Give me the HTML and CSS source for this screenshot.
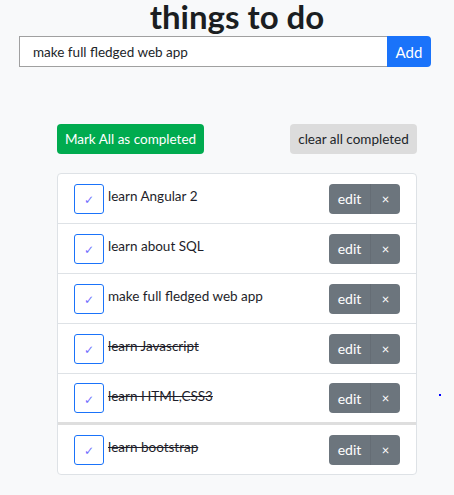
FILE: index.html
```html
<!DOCTYPE html>
<html>
<head>
<meta charset="utf-8">
<link rel="stylesheet" href="styles.css">
</head>
<body>
<h1 class="title">things to do</h1>
<form class="add-form">
  <input class="add-input" type="text" value="make full fledged web app">
  <button type="button" class="btn-add">Add</button>
</form>
<div class="actions">
  <button class="btn-mark">Mark All as completed</button>
  <button class="btn-clear">clear all completed</button>
</div>
<ul class="todo-list">
  <li class="todo"><span class="check">&#10003;</span><span class="label">learn Angular 2</span><span class="grp"><button class="b-edit">edit</button><button class="b-del">&times;</button></span></li>
  <li class="todo"><span class="check">&#10003;</span><span class="label">learn about SQL</span><span class="grp"><button class="b-edit">edit</button><button class="b-del">&times;</button></span></li>
  <li class="todo"><span class="check">&#10003;</span><span class="label">make full fledged web app</span><span class="grp"><button class="b-edit">edit</button><button class="b-del">&times;</button></span></li>
  <li class="todo"><span class="check">&#10003;</span><span class="label done">learn Javascript</span><span class="grp"><button class="b-edit">edit</button><button class="b-del">&times;</button></span></li>
  <li class="todo thick"><span class="check">&#10003;</span><span class="label done">learn HTML,CSS3</span><span class="grp"><button class="b-edit">edit</button><button class="b-del">&times;</button></span></li>
  <li class="todo"><span class="check">&#10003;</span><span class="label done">learn bootstrap</span><span class="grp"><button class="b-edit">edit</button><button class="b-del">&times;</button></span></li>
</ul>
<span class="dot"></span>
</body>
</html>
```
FILE: styles.css
```css
html, body { margin: 0; padding: 0; }
body {
  background: #f8f9fa;
  font-family: Lato, "Noto Sans", sans-serif;
  font-size: 13px;
  color: #212529;
  position: relative;
  min-height: 495px;
}
.title {
  margin: 0;
  padding: 0 0 0 20px;
  text-align: center;
  font-size: 33px;
  font-weight: 700;
  line-height: 33px;
  height: 36px;
  color: #1b1e21;
  white-space: nowrap;
}
.add-form {
  display: flex;
  margin: 0 23px 0 19px;
  height: 31px;
}
.add-input {
  flex: 1;
  box-sizing: border-box;
  height: 31px;
  border: 1px solid #a0a0a0;
  border-right: none;
  padding: 0 13px;
  font: inherit;
  font-size: 13.5px;
  color: #212529;
  background: #fff;
  outline: none;
}
.btn-add {
  width: 44px;
  height: 31px;
  border: none;
  border-radius: 0 4px 4px 0;
  background: #1a73fa;
  color: #fff;
  font: inherit;
  font-size: 15px;
  padding: 0;
}
.actions {
  display: flex;
  justify-content: space-between;
  margin: 57px 0 0 57px;
  width: 360px;
}
.actions button {
  height: 30px;
  border: none;
  border-radius: 4px;
  font: inherit;
  font-size: 13.5px;
  padding: 0;
  white-space: nowrap;
}
.btn-mark { background: #00ab4f; color: #fff; width: 147px; }
.btn-clear { background: #dcdcdc; color: #212529; width: 127px; }
.todo-list {
  list-style: none;
  margin: 19px 0 0 57px;
  padding: 0;
  width: 360px;
  box-sizing: border-box;
  border: 1px solid #dee2e6;
  border-radius: 4px;
  background: #fff;
}
.todo {
  display: flex;
  align-items: center;
  height: 49px;
  padding: 0 16px;
  border-bottom: 1px solid #dee2e6;
}
.todo:last-child { border-bottom: none; height: 49px; }
.todo.thick { border-bottom: 3px solid #dedede; height: 48px; }
.check {
  box-sizing: border-box;
  width: 30px;
  height: 30px;
  border: 1px solid #1a73fa;
  border-radius: 3px;
  display: flex;
  align-items: center;
  justify-content: center;
  color: #7070ff;
  font-family: "DejaVu Sans", sans-serif;
  font-size: 12px;
  padding-top: 3px;
  flex: none;
}
.label {
  flex: 1;
  margin-left: 4px;
  margin-top: -5px;
  color: #1e1e2a;
  font-size: 13.5px;
  white-space: nowrap;
}
.label.done { text-decoration: line-through; }
.grp { display: flex; flex: none; }
.grp button {
  height: 30px;
  border: none;
  background: #6c757d;
  color: #fff;
  font: inherit;
  padding: 0;
}
.b-edit { width: 41px; font-size: 14px !important; border-radius: 4px 0 0 4px; }
.b-del { width: 30px; font-size: 13px; border-radius: 0 4px 4px 0; border-left: 1px solid #656d75 !important; }
.dot {
  position: absolute;
  left: 439px;
  top: 394px;
  width: 2px;
  height: 2px;
  background: #0000ff;
}
```
